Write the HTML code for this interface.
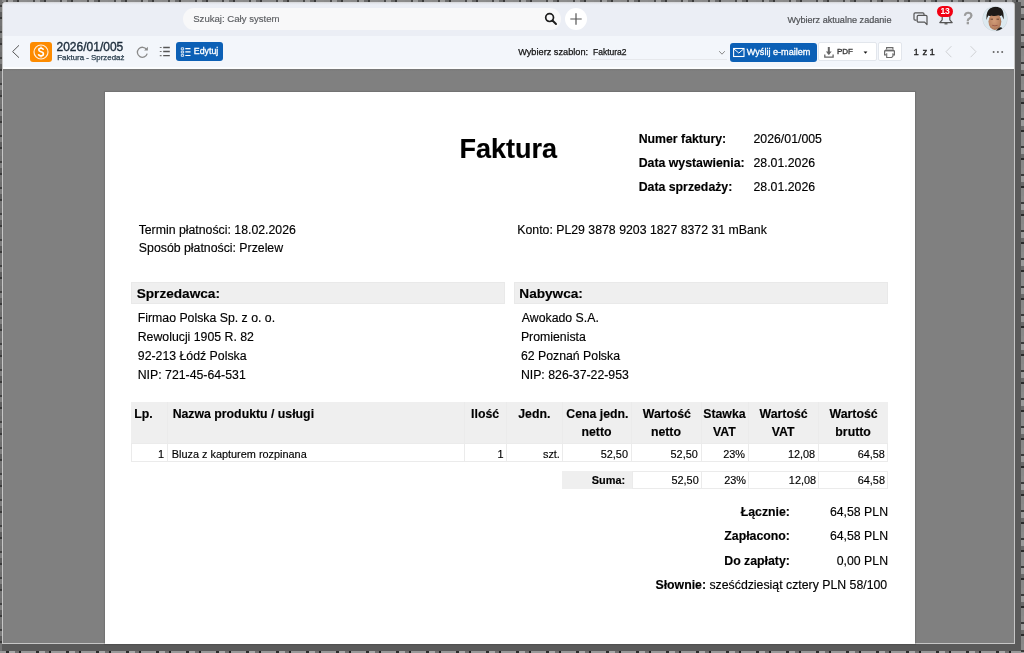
<!DOCTYPE html>
<html><head><meta charset="utf-8">
<style>
*{box-sizing:border-box}
html,body{margin:0;padding:0;width:1024px;height:653px;overflow:hidden;background:#5a5a5a;font-family:"Liberation Sans",sans-serif}
.a{position:absolute}
.t{position:absolute;white-space:nowrap;line-height:1}
.dt{-webkit-text-stroke:0.15px #000}
.b{font-weight:bold}
</style></head>
<body><div id="root" style="position:absolute;left:0;top:0;width:1024px;height:653px;will-change:transform">
<!-- window frame -->
<div class="a" style="left:0;top:0;width:1024px;height:2px;background:repeating-linear-gradient(90deg,#8a8a8a 0 6px,#4a4a4a 6px 8px,#9a9a9a 8px 13px,#6a6a6a 13px 17px,#3a3a3a 17px 19px,#8c8c8c 19px 27px)"></div>
<div class="a" style="left:0;top:0;width:2px;height:653px;background:repeating-linear-gradient(180deg,#707070 0 5px,#404040 5px 7px,#7e7e7e 7px 12px,#5e5e5e 12px 17px,#383838 17px 19px,#747474 19px 26px)"></div>
<div class="a" style="left:0;top:651px;width:1024px;height:2px;background:repeating-linear-gradient(90deg,#9a9a9a 0 6px,#2e2e2e 6px 9px,#a8a8a8 9px 15px,#707070 15px 19px,#222 19px 21px,#999 21px 30px)"></div>
<div class="a" style="left:1021px;top:0;width:3px;height:653px;background:repeating-linear-gradient(180deg,#8a8a8a 0 6px,#3a3a3a 6px 8px,#9a9a9a 8px 14px,#6a6a6a 14px 18px,#2a2a2a 18px 20px,#888 20px 28px)"></div>
<div class="a" style="left:2px;top:2px;width:1013px;height:642px;background:#c6c6c6;border-radius:3px 3px 0 0"></div>
<div class="a" style="left:3px;top:2px;width:1011px;height:34px;background:linear-gradient(180deg,#d4d4d6 0,#dfe1e6 1px,#e8ebf2 2px,#ebeef5 3px);border-radius:3px 3px 0 0"></div>
<div class="a" style="left:3px;top:36px;width:1011px;height:32.5px;background:linear-gradient(180deg,#f3f6fb 0,#f3f6fb 30.5px,#fcfdfe 31px,#fcfdfe 32.5px)"></div>
<div class="a" style="left:3px;top:68.5px;width:1011px;height:574.5px;background:linear-gradient(180deg,#777 0,#808080 2px)"></div>
<div class="a" style="left:104.5px;top:92.4px;width:810.6px;height:551.6px;background:#fff;box-shadow:0 0 1px 1px rgba(0,0,0,.10)"></div>

<!-- top bar -->
<div class="a" style="left:183px;top:8px;width:378px;height:22px;border-radius:11px;background:#f8f8f9"></div>
<div class="t" style="left:193.2px;top:14.4px;font-size:9.6px;color:#5c5e62;-webkit-text-stroke:0.15px #5c5e62">Szukaj: Cały system</div>
<svg class="a" style="left:544px;top:12px" width="14" height="14" viewBox="0 0 14 14"><circle cx="5.6" cy="5.6" r="3.9" fill="none" stroke="#1d1d1d" stroke-width="1.7"/><path d="M8.5 8.5 L12 12" stroke="#1d1d1d" stroke-width="1.9" stroke-linecap="round"/></svg>
<div class="a" style="left:565px;top:8px;width:22px;height:22px;border-radius:11px;background:#fff"></div>
<svg class="a" style="left:570px;top:13px" width="12" height="12" viewBox="0 0 12 12"><path d="M6 0.3V11.7M0.3 6H11.7" stroke="#555" stroke-width="1.2"/></svg>
<div class="t" style="left:787.4px;top:15.5px;font-size:9.1px;color:#505256;-webkit-text-stroke:0.2px #505256">Wybierz aktualne zadanie</div>
<svg class="a" style="left:913px;top:12px" width="16" height="14" viewBox="0 0 16 14"><path d="M3.5 8.2H2.2A1.2 1.2 0 0 1 1 7V2A1.2 1.2 0 0 1 2.2 0.8H9.8A1.2 1.2 0 0 1 11 2V3.4" fill="none" stroke="#555" stroke-width="1.2"/><path d="M5.4 3.4H12.8A1.2 1.2 0 0 1 14 4.6V12.6L11.6 10.2H5.4A1.2 1.2 0 0 1 4.2 9V4.6A1.2 1.2 0 0 1 5.4 3.4Z" fill="none" stroke="#555" stroke-width="1.2" stroke-linejoin="round"/></svg>
<svg class="a" style="left:938px;top:10px" width="16" height="16" viewBox="0 0 16 16"><path d="M4.2 5.5V9.8L1.8 12.6H14.2L11.8 9.8V5.5" fill="none" stroke="#555" stroke-width="1.2" stroke-linejoin="round"/><path d="M6.5 13.8H9.5" stroke="#555" stroke-width="1.3"/></svg>
<div class="a" style="left:937.4px;top:5.6px;width:15.2px;height:11.2px;border-radius:5.6px;background:#f20012"></div>
<div class="t b" style="left:937.4px;top:7.2px;width:15.2px;text-align:center;font-size:8.6px;color:#fff;letter-spacing:-0.2px">13</div>
<div class="t" style="left:963.4px;top:11.4px;font-size:16.6px;color:#999;-webkit-text-stroke:0.7px #999">?</div>
<svg class="a" style="left:982px;top:6px" width="26" height="26" viewBox="0 0 26 26"><defs><clipPath id="av"><circle cx="13" cy="12.7" r="12.1"/></clipPath><radialGradient id="fg" cx="0.45" cy="0.45" r="0.6"><stop offset="0" stop-color="#d29c78"/><stop offset="0.7" stop-color="#bb8462"/><stop offset="1" stop-color="#9c6a4c"/></radialGradient></defs><circle cx="13" cy="12.7" r="12.5" fill="#cdd2d8"/><circle cx="13" cy="12.7" r="12.1" fill="#dce9f0"/><g clip-path="url(#av)"><path d="M16.5 21.5 Q21.5 20.5 22.5 26 L13 26Z" fill="#1c1c1c"/><ellipse cx="12.9" cy="15.6" rx="6.4" ry="8.4" fill="url(#fg)"/><path d="M4.6 14 Q3.8 5.5 8 2.4 Q12.5 -0.6 17.8 1.6 Q22.4 3.8 21.6 13.5 Q20.6 10.6 19.6 9.2 Q18.5 10.6 16.5 9.3 Q12.5 10.6 9.5 9.4 Q7.5 10.3 6.4 9.6 Q5.3 11 4.6 14Z" fill="#1d1a18"/><path d="M8.6 13.2 H11 M14.5 13.2 H17" stroke="#5a3a2a" stroke-width="0.9"/><path d="M10.2 19.3 Q12.9 20.3 15.6 19.3" stroke="#9c5a4a" stroke-width="1" fill="none"/></g></svg>

<!-- toolbar -->
<svg class="a" style="left:11px;top:44px" width="10" height="15" viewBox="0 0 10 15"><path d="M8 1.3L1.6 7.6L8 13.7" fill="none" stroke="#555" stroke-width="1"/></svg>
<div class="a" style="left:30.4px;top:42.3px;width:21.4px;height:20.1px;border-radius:3px;background:#fd8b00"></div>
<svg class="a" style="left:32.6px;top:44.3px" width="16" height="16" viewBox="0 0 16 16"><circle cx="8" cy="8" r="7" fill="none" stroke="#ffeedd" stroke-width="1.2"/><path d="M10.4 5.9Q10.1 4.3 8 4.3Q5.8 4.3 5.8 5.9Q5.8 7.2 8 7.7Q10.4 8.2 10.4 10Q10.4 11.8 8 11.8Q5.7 11.8 5.5 10.1" fill="none" stroke="#fff" stroke-width="1.6"/><path d="M8 2.5V4.6M8 11.4V13.5" stroke="#fff" stroke-width="1.2"/></svg>
<div class="t" style="left:56.5px;top:40.5px;font-size:12px;color:#1b2b3a;-webkit-text-stroke:0.35px #1b2b3a">2026/01/005</div>
<div class="t" style="left:57.3px;top:54.4px;font-size:7.9px;color:#2c4050;-webkit-text-stroke:0.25px #2c4050">Faktura - Sprzedaż</div>
<svg class="a" style="left:135px;top:45px" width="14" height="14" viewBox="0 0 14 14"><path d="M11.6 4.6A5 5 0 1 0 12.2 8.6" fill="none" stroke="#8a8a8a" stroke-width="1.3"/><path d="M12.9 1.8V5.6H9.1Z" fill="#8a8a8a"/></svg>
<svg class="a" style="left:159px;top:46px" width="12" height="11" viewBox="0 0 12 11"><path d="M0.8 1.5H2.6M0.8 5.5H2.6M0.8 9.7H2.6" stroke="#777" stroke-width="1.2"/><path d="M4.2 1.5H10.8M4.2 5.5H10.8M4.2 9.7H10.8" stroke="#555" stroke-width="1.3"/></svg>
<div class="a" style="left:176px;top:42px;width:46.8px;height:19.3px;border-radius:3px;background:#0c60b6"></div>
<svg class="a" style="left:180px;top:47px" width="12" height="10" viewBox="0 0 12 10"><path d="M1.3 0.8H3.6V2.8H1.3ZM1.3 4.1H3.6V6H1.3ZM1.3 7.3H3.6V9.3H1.3Z" fill="none" stroke="#fff" stroke-width="0.8"/><path d="M5.3 1.6H10.5M5.3 4.9H10.5M5.3 8.5H10.5" stroke="#fff" stroke-width="1.2"/></svg>
<div class="t" style="left:193.8px;top:47.2px;font-size:8.8px;color:#fff;-webkit-text-stroke:0.3px #fff">Edytuj</div>
<div class="t" style="left:518.2px;top:47.6px;font-size:9.2px;color:#141414;-webkit-text-stroke:0.25px #141414">Wybierz szablon:</div>
<div class="t" style="left:593px;top:47.9px;font-size:8.5px;color:#141414;-webkit-text-stroke:0.25px #141414">Faktura2</div>
<div class="a" style="left:590.6px;top:59px;width:136px;height:1px;background:#e6e8ec"></div>
<svg class="a" style="left:718px;top:50px" width="8" height="6" viewBox="0 0 8 6"><path d="M1.2 1.2L4 4.2L6.8 1.2" fill="none" stroke="#888" stroke-width="1"/></svg>
<div class="a" style="left:729.8px;top:42.6px;width:87.6px;height:19.2px;border-radius:3px;background:#0c60b6"></div>
<svg class="a" style="left:732px;top:47px" width="13" height="11" viewBox="0 0 13 11"><rect x="1.6" y="1.5" width="10.4" height="8" fill="none" stroke="#fff" stroke-width="1.1"/><path d="M1.8 1.8L6.8 6.1L11.8 1.8" fill="none" stroke="#fff" stroke-width="1"/></svg>
<div class="t" style="left:746.8px;top:47.5px;font-size:9.1px;color:#fff;-webkit-text-stroke:0.3px #fff">Wyślij e-mailem</div>
<div class="a" style="left:818px;top:42.3px;width:58.5px;height:19.2px;background:#fff;border:1px solid #e2e6ec;border-radius:2px"></div>
<svg class="a" style="left:823px;top:46px" width="12" height="13" viewBox="0 0 12 13"><path d="M5.8 1V8.2" stroke="#666" stroke-width="2"/><path d="M2.9 5.6L5.8 9L8.7 5.6Z" fill="#666"/><path d="M1.8 8.5V11.1H10.1V8.5" fill="none" stroke="#666" stroke-width="1.3"/></svg>
<div class="t" style="left:836.9px;top:47.9px;font-size:8px;color:#333;-webkit-text-stroke:0.3px #333">PDF</div>
<svg class="a" style="left:863px;top:51px" width="5" height="3" viewBox="0 0 5 3"><path d="M0.6 0.4H4.4L2.5 2.8Z" fill="#111"/></svg>
<div class="a" style="left:877.6px;top:42.3px;width:24.5px;height:19.2px;background:#fff;border:1px solid #e2e6ec;border-radius:2px"></div>
<svg class="a" style="left:883px;top:46px" width="13" height="13" viewBox="0 0 13 13"><path d="M3.6 3.6V1.6H9.9V3.6" fill="none" stroke="#6a6a6a" stroke-width="1.1"/><path d="M3 8.9H1.6V5.2Q1.6 4.3 2.5 4.3H10.5Q11.4 4.3 11.4 5.2V8.9H10" fill="none" stroke="#6a6a6a" stroke-width="1.2"/><path d="M2 4.6H11" stroke="#6a6a6a" stroke-width="1.6"/><path d="M3.7 7.2V11.5H8.7L9.9 10.3V7.2" fill="none" stroke="#6a6a6a" stroke-width="1.1"/></svg>
<div class="t" style="left:913.6px;top:47.2px;font-size:9.6px;color:#222;-webkit-text-stroke:0.3px #222">1</div><div class="t" style="left:922.4px;top:47.2px;font-size:9.6px;color:#222;-webkit-text-stroke:0.3px #222">z</div><div class="t" style="left:929.4px;top:47.2px;font-size:9.6px;color:#222;-webkit-text-stroke:0.3px #222">1</div>
<svg class="a" style="left:944px;top:45px" width="9" height="14" viewBox="0 0 9 14"><path d="M7.4 1.2L2 6.7L7.4 12.2" fill="none" stroke="#cfd1d4" stroke-width="1"/></svg>
<svg class="a" style="left:969px;top:45px" width="9" height="14" viewBox="0 0 9 14"><path d="M1.6 1.2L7 6.7L1.6 12.2" fill="none" stroke="#cfd1d4" stroke-width="1"/></svg>
<svg class="a" style="left:991px;top:50px" width="14" height="4" viewBox="0 0 14 4"><circle cx="2.6" cy="2" r="1" fill="#666"/><circle cx="6.9" cy="2" r="1" fill="#666"/><circle cx="11.2" cy="2" r="1" fill="#666"/></svg>
<!--DOC-->
<div class="a" style="left:131.2px;top:282px;width:374.30px;height:22.00px;background:#efefef;box-shadow:inset 0 0 0 1px #e9e9e9;"></div>
<div class="a" style="left:514.1px;top:282px;width:373.90px;height:22.00px;background:#efefef;box-shadow:inset 0 0 0 1px #e9e9e9;"></div>
<div class="a" style="left:131.3px;top:401.7px;width:756.70px;height:42.20px;background:#efefef;"></div>
<div class="a" style="left:131.3px;top:443.4px;width:756.70px;height:18.90px;background:#fff;box-shadow:inset 0 0 0 1px #ebebeb;"></div>
<div class="a" style="left:166.8px;top:401.7px;width:1.00px;height:60.60px;background:#ebebeb;"></div>
<div class="a" style="left:463.9px;top:401.7px;width:1.00px;height:60.60px;background:#ebebeb;"></div>
<div class="a" style="left:505.9px;top:401.7px;width:1.00px;height:60.60px;background:#ebebeb;"></div>
<div class="a" style="left:562.0px;top:401.7px;width:1.00px;height:60.60px;background:#ebebeb;"></div>
<div class="a" style="left:631.0px;top:401.7px;width:1.00px;height:60.60px;background:#ebebeb;"></div>
<div class="a" style="left:700.7px;top:401.7px;width:1.00px;height:60.60px;background:#ebebeb;"></div>
<div class="a" style="left:748.0px;top:401.7px;width:1.00px;height:60.60px;background:#ebebeb;"></div>
<div class="a" style="left:817.8px;top:401.7px;width:1.00px;height:60.60px;background:#ebebeb;"></div>
<div class="a" style="left:562px;top:471.2px;width:69.50px;height:18.10px;background:#efefef;"></div>
<div class="a" style="left:631.5px;top:471.2px;width:256.50px;height:18.10px;background:#fff;box-shadow:inset 0 0 0 1px #ebebeb;"></div>
<div class="a" style="left:700.7px;top:471.2px;width:1.00px;height:18.10px;background:#ebebeb;"></div>
<div class="a" style="left:748.0px;top:471.2px;width:1.00px;height:18.10px;background:#ebebeb;"></div>
<div class="a" style="left:817.8px;top:471.2px;width:1.00px;height:18.10px;background:#ebebeb;"></div>
<div class="t dt" id="e0" style="top:136.14px;font-size:27.0px;color:#000;font-weight:bold;left:459.41px;"><span>Faktura</span></div>
<div class="t dt" id="e1" style="top:132.59px;font-size:12.3px;color:#000;font-weight:bold;left:638.68px;"><span>Numer faktury:</span></div>
<div class="t dt" id="e2" style="top:132.59px;font-size:12.3px;color:#000;left:753.52px;"><span>2026/01/005</span></div>
<div class="t dt" id="e3" style="top:156.59px;font-size:12.3px;color:#000;font-weight:bold;left:638.68px;"><span>Data wystawienia:</span></div>
<div class="t dt" id="e4" style="top:156.59px;font-size:12.3px;color:#000;left:753.52px;"><span>28.01.2026</span></div>
<div class="t dt" id="e5" style="top:180.59px;font-size:12.3px;color:#000;font-weight:bold;left:638.68px;"><span>Data sprzedaży:</span></div>
<div class="t dt" id="e6" style="top:180.59px;font-size:12.3px;color:#000;left:753.52px;"><span>28.01.2026</span></div>
<div class="t dt" id="e7" style="top:223.59px;font-size:12.3px;color:#000;left:138.63px;"><span>Termin płatności: 18.02.2026</span></div>
<div class="t dt" id="e8" style="top:241.59px;font-size:12.3px;color:#000;left:138.87px;"><span>Sposób płatności: Przelew</span></div>
<div class="t dt" id="e9" style="top:223.59px;font-size:12.3px;color:#000;left:517.26px;"><span>Konto: PL29 3878 9203 1827 8372 31 mBank</span></div>
<div class="t dt" id="e10" style="top:287.46px;font-size:13.63px;color:#000;font-weight:bold;left:136.68px;"><span>Sprzedawca:</span></div>
<div class="t dt" id="e11" style="top:287.46px;font-size:13.63px;color:#000;font-weight:bold;left:519.31px;"><span>Nabywca:</span></div>
<div class="t dt" id="e12" style="top:311.59px;font-size:12.3px;color:#000;left:137.73px;"><span>Firmao Polska Sp. z o. o.</span></div>
<div class="t dt" id="e13" style="top:311.59px;font-size:12.3px;color:#000;left:521.79px;"><span>Awokado S.A.</span></div>
<div class="t dt" id="e14" style="top:330.59px;font-size:12.3px;color:#000;left:137.73px;"><span>Rewolucji 1905 R. 82</span></div>
<div class="t dt" id="e15" style="top:330.59px;font-size:12.3px;color:#000;left:520.89px;"><span>Promienista</span></div>
<div class="t dt" id="e16" style="top:349.59px;font-size:12.3px;color:#000;left:137.83px;"><span>92-213 Łódź Polska</span></div>
<div class="t dt" id="e17" style="top:349.59px;font-size:12.3px;color:#000;left:520.89px;"><span>62 Poznań Polska</span></div>
<div class="t dt" id="e18" style="top:368.59px;font-size:12.3px;color:#000;left:137.73px;"><span>NIP: 721-45-64-531</span></div>
<div class="t dt" id="e19" style="top:368.59px;font-size:12.3px;color:#000;left:520.89px;"><span>NIP: 826-37-22-953</span></div>
<div class="t dt" id="e20" style="top:407.59px;font-size:12.3px;color:#000;font-weight:bold;left:134.26px;"><span>Lp.</span></div>
<div class="t dt" id="e21" style="top:407.59px;font-size:12.3px;color:#000;font-weight:bold;left:172.63px;"><span>Nazwa produktu / usługi</span></div>
<div class="t dt" id="e22" style="top:407.59px;font-size:12.3px;color:#000;font-weight:bold;left:285.13px;width:400px;text-align:center;"><span>Ilość</span></div>
<div class="t dt" id="e23" style="top:407.59px;font-size:12.3px;color:#000;font-weight:bold;left:334.32px;width:400px;text-align:center;"><span>Jedn.</span></div>
<div class="t dt" id="e24" style="top:407.59px;font-size:12.3px;color:#000;font-weight:bold;left:397.45px;width:400px;text-align:center;"><span>Cena jedn.</span></div>
<div class="t dt" id="e25" style="top:425.59px;font-size:12.3px;color:#000;font-weight:bold;left:396.55px;width:400px;text-align:center;"><span>netto</span></div>
<div class="t dt" id="e26" style="top:407.59px;font-size:12.3px;color:#000;font-weight:bold;left:466.85px;width:400px;text-align:center;"><span>Wartość</span></div>
<div class="t dt" id="e27" style="top:425.59px;font-size:12.3px;color:#000;font-weight:bold;left:465.95px;width:400px;text-align:center;"><span>netto</span></div>
<div class="t dt" id="e28" style="top:407.59px;font-size:12.3px;color:#000;font-weight:bold;left:524.45px;width:400px;text-align:center;"><span>Stawka</span></div>
<div class="t dt" id="e29" style="top:425.59px;font-size:12.3px;color:#000;font-weight:bold;left:524.45px;width:400px;text-align:center;"><span>VAT</span></div>
<div class="t dt" id="e30" style="top:407.59px;font-size:12.3px;color:#000;font-weight:bold;left:583.58px;width:400px;text-align:center;"><span>Wartość</span></div>
<div class="t dt" id="e31" style="top:425.59px;font-size:12.3px;color:#000;font-weight:bold;left:583.13px;width:400px;text-align:center;"><span>VAT</span></div>
<div class="t dt" id="e32" style="top:407.59px;font-size:12.3px;color:#000;font-weight:bold;left:653.55px;width:400px;text-align:center;"><span>Wartość</span></div>
<div class="t dt" id="e33" style="top:425.59px;font-size:12.3px;color:#000;font-weight:bold;left:653.10px;width:400px;text-align:center;"><span>brutto</span></div>
<div class="t dt" id="e34" style="top:448.77px;font-size:10.9px;color:#000;left:-235.84px;width:400px;text-align:right;"><span>1</span></div>
<div class="t dt" id="e35" style="top:448.77px;font-size:10.9px;color:#000;left:171.73px;"><span>Bluza z kapturem rozpinana</span></div>
<div class="t dt" id="e36" style="top:448.77px;font-size:10.9px;color:#000;left:103.53px;width:400px;text-align:right;"><span>1</span></div>
<div class="t dt" id="e37" style="top:448.77px;font-size:10.9px;color:#000;left:159.90px;width:400px;text-align:right;"><span>szt.</span></div>
<div class="t dt" id="e38" style="top:448.77px;font-size:10.9px;color:#000;left:228.00px;width:400px;text-align:right;"><span>52,50</span></div>
<div class="t dt" id="e39" style="top:448.77px;font-size:10.9px;color:#000;left:297.79px;width:400px;text-align:right;"><span>52,50</span></div>
<div class="t dt" id="e40" style="top:448.77px;font-size:10.9px;color:#000;left:345.00px;width:400px;text-align:right;"><span>23%</span></div>
<div class="t dt" id="e41" style="top:448.77px;font-size:10.9px;color:#000;left:415.16px;width:400px;text-align:right;"><span>12,08</span></div>
<div class="t dt" id="e42" style="top:448.77px;font-size:10.9px;color:#000;left:484.95px;width:400px;text-align:right;"><span>64,58</span></div>
<div class="t dt" id="e43" style="top:474.77px;font-size:10.9px;color:#000;font-weight:bold;left:225.08px;width:400px;text-align:right;"><span>Suma:</span></div>
<div class="t dt" id="e44" style="top:474.77px;font-size:10.9px;color:#000;left:298.74px;width:400px;text-align:right;"><span>52,50</span></div>
<div class="t dt" id="e45" style="top:474.77px;font-size:10.9px;color:#000;left:345.95px;width:400px;text-align:right;"><span>23%</span></div>
<div class="t dt" id="e46" style="top:474.77px;font-size:10.9px;color:#000;left:416.11px;width:400px;text-align:right;"><span>12,08</span></div>
<div class="t dt" id="e47" style="top:474.77px;font-size:10.9px;color:#000;left:485.00px;width:400px;text-align:right;"><span>64,58</span></div>
<div class="t dt" id="e48" style="top:505.59px;font-size:12.3px;color:#000;font-weight:bold;left:389.90px;width:400px;text-align:right;"><span>Łącznie:</span></div>
<div class="t dt" id="e49" style="top:505.59px;font-size:12.3px;color:#000;left:488.06px;width:400px;text-align:right;"><span>64,58 PLN</span></div>
<div class="t dt" id="e50" style="top:529.59px;font-size:12.3px;color:#000;font-weight:bold;left:389.90px;width:400px;text-align:right;"><span>Zapłacono:</span></div>
<div class="t dt" id="e51" style="top:529.59px;font-size:12.3px;color:#000;left:488.06px;width:400px;text-align:right;"><span>64,58 PLN</span></div>
<div class="t dt" id="e52" style="top:554.59px;font-size:12.3px;color:#000;font-weight:bold;left:389.90px;width:400px;text-align:right;"><span>Do zapłaty:</span></div>
<div class="t dt" id="e53" style="top:554.59px;font-size:12.3px;color:#000;left:488.06px;width:400px;text-align:right;"><span>0,00 PLN</span></div>
<div class="t dt" id="e54" style="top:578.59px;font-size:12.3px;color:#000;left:487.16px;width:400px;text-align:right;"><span><b>Słownie:</b> sześćdziesiąt cztery PLN 58/100</span></div>
<!--DOC-->
</div></body></html>
